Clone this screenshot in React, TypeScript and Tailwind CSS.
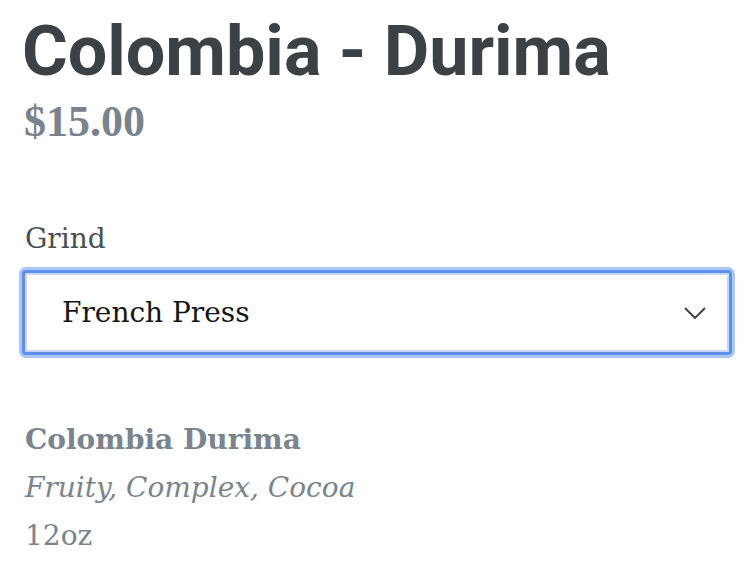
export default function App() {
  return (
    <div className="w-[748px] h-[576px] bg-white pl-[22px] pr-[16px] pt-[16px] font-['DejaVu_Serif',serif]">
      <h1 className="font-['Roboto',sans-serif] font-bold text-[70px] leading-[70px] text-[#3c4146]">
        Colombia - Durima
      </h1>
      <p className="mt-[14px] pl-[2px] font-['Liberation_Serif',serif] font-bold text-[44px] leading-[44px] text-[#7a838b]">
        $15.00
      </p>

      <label className="block mt-[81px] pl-[3px] text-[28px] leading-[28px] text-[#4a4f54]">
        Grind
      </label>
      <div className="mt-[17px] h-[85px] flex items-center justify-between pl-[37px] pr-[22px] rounded-[4px] border-[3px] border-[#5d8ff0] shadow-[0_0_0_3px_#aac7f8,inset_0_0_0_2px_#c5d8fb] bg-white">
        <span className="text-[28px] leading-[28px] text-[#151515]">French Press</span>
        <svg width="22" height="12" viewBox="0 0 22 12" fill="none" className="mr-[1px]">
          <path d="M1 1l10 10L21 1" stroke="#444" strokeWidth="2" />
        </svg>
      </div>

      <div className="mt-[61px] pl-[3px] text-[28px] leading-[48px] text-[#7b848c]">
        <p className="font-bold">Colombia Durima</p>
        <p className="italic">Fruity, Complex, Cocoa</p>
        <p>12oz</p>
      </div>
    </div>
  );
}
